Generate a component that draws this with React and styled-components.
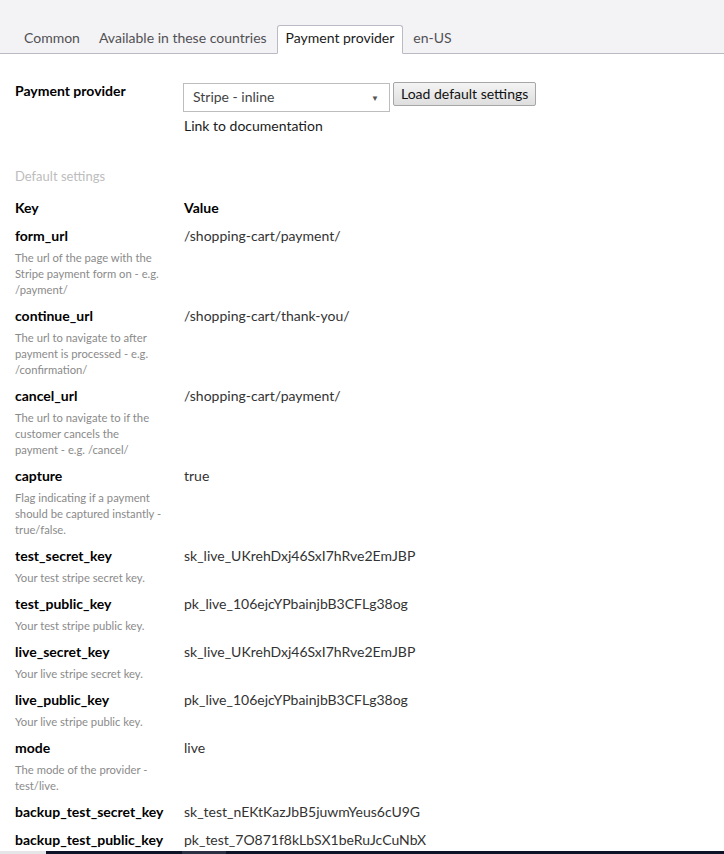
import React from "react";
import styled, { createGlobalStyle } from "styled-components";

const GlobalStyle = createGlobalStyle`
  html, body {
    margin: 0;
    padding: 0;
    background: #ffffff;
    font-family: Lato, "Open Sans", sans-serif;
    color: #1b1b1b;
  }
`;

const Page = styled.div`
  width: 724px;
  height: 854px;
  overflow: hidden;
  display: flex;
  flex-direction: column;
`;

const TabBar = styled.div`
  height: 53px;
  background: #f3f3f5;
  border-bottom: 1px solid #bbbac4;
  display: flex;
  align-items: flex-end;
  padding-left: 15px;
`;

const Tab = styled.div`
  height: 29px;
  box-sizing: border-box;
  padding: 0 8px 4px;
  margin-right: 1px;
  margin-bottom: -1px;
  display: flex;
  align-items: center;
  font-size: 14px;
  color: ${(p) => (p.$active ? "#1b1b1b" : "#515054")};
  background: ${(p) => (p.$active ? "#ffffff" : "transparent")};
  border: 1px solid ${(p) => (p.$active ? "#bbbac4" : "transparent")};
  border-bottom-color: ${(p) => (p.$active ? "#ffffff" : "transparent")};
  border-radius: 3px 3px 0 0;
`;

const Content = styled.div`
  flex: 1;
  padding: 27px 15px 0;
`;

const FieldRow = styled.div`
  display: grid;
  grid-template-columns: 169px 1fr;
`;

const FieldLabel = styled.div`
  font-size: 14px;
  font-weight: 700;
  line-height: 20px;
  color: #000;
`;

const Controls = styled.div`
  display: flex;
  flex-direction: column;
`;

const ControlLine = styled.div`
  display: flex;
  align-items: flex-start;
  gap: 3px;
  margin-top: 2px;
  margin-left: -1px;
`;

const Select = styled.div`
  width: 207px;
  height: 29px;
  box-sizing: border-box;
  border: 1px solid #bdbdbd;
  background: #fff;
  display: flex;
  align-items: center;
  justify-content: space-between;
  padding: 0 10px 2px 9px;
  font-size: 14px;
  color: #444;
`;

const Caret = styled.span`
  font-size: 8px;
  color: #555;
  padding-top: 3px;
`;

const Button = styled.button`
  height: 24px;
  padding: 0 7px;
  font-family: Lato, "Open Sans", sans-serif;
  font-size: 14px;
  color: #111;
  background: linear-gradient(#f4f4f4, #dedede);
  border: 1px solid #a6a6a6;
  border-radius: 2px;
  line-height: 20px;
  margin-top: -1px;
`;

const DocLink = styled.div`
  margin-top: 4px;
  font-size: 14px;
  line-height: 20px;
  color: #1b1b1b;
`;

const SectionTitle = styled.div`
  margin-top: 30px;
  font-size: 13px;
  line-height: 20px;
  color: #bdbdbd;
`;

const Table = styled.div`
  margin-top: 12px;
  display: grid;
  grid-template-columns: 169px 1fr;
`;

const Cell = styled.div`
  padding-bottom: ${(p) => (p.$last ? "1px" : "8px")};
`;

const KeyText = styled.div`
  font-size: 14px;
  font-weight: 700;
  line-height: 20px;
  color: #000;
`;

const Desc = styled.div`
  margin-top: 4px;
  font-size: 11.25px;
  line-height: 16px;
  color: #8a8a8a;
  width: 147px;
`;

const Value = styled.div`
  font-size: 14px;
  line-height: 20px;
  color: #333;
`;

const BottomBar = styled.div`
  height: 3px;
  display: flex;
`;

const BarPart = styled.div`
  width: ${(p) => p.$w}px;
  flex: ${(p) => (p.$grow ? 1 : "none")};
  background: ${(p) => p.$c};
`;

const rows = [
  ["form_url", "The url of the page with the Stripe payment form on - e.g. /payment/", "/shopping-cart/payment/"],
  ["continue_url", "The url to navigate to after payment is processed - e.g. /confirmation/", "/shopping-cart/thank-you/"],
  ["cancel_url", "The url to navigate to if the customer cancels the payment - e.g. /cancel/", "/shopping-cart/payment/"],
  ["capture", "Flag indicating if a payment should be captured instantly - true/false.", "true"],
  ["test_secret_key", "Your test stripe secret key.", "sk_live_UKrehDxj46SxI7hRve2EmJBP"],
  ["test_public_key", "Your test stripe public key.", "pk_live_106ejcYPbainjbB3CFLg38og"],
  ["live_secret_key", "Your live stripe secret key.", "sk_live_UKrehDxj46SxI7hRve2EmJBP"],
  ["live_public_key", "Your live stripe public key.", "pk_live_106ejcYPbainjbB3CFLg38og"],
  ["mode", "The mode of the provider - test/live.", "live"],
  ["backup_test_secret_key", null, "sk_test_nEKtKazJbB5juwmYeus6cU9G"],
  ["backup_test_public_key", null, "pk_test_7O871f8kLbSX1beRuJcCuNbX"],
];

const tabs = ["Common", "Available in these countries", "Payment provider", "en-US"];

export default function App() {
  return (
    <Page>
      <GlobalStyle />
      <TabBar>
        {tabs.map((t) => (
          <Tab key={t} $active={t === "Payment provider"}>
            {t}
          </Tab>
        ))}
      </TabBar>
      <Content>
        <FieldRow>
          <FieldLabel>Payment provider</FieldLabel>
          <Controls>
            <ControlLine>
              <Select>
                <span>Stripe - inline</span>
                <Caret>▼</Caret>
              </Select>
              <Button>Load default settings</Button>
            </ControlLine>
            <DocLink>Link to documentation</DocLink>
          </Controls>
        </FieldRow>
        <SectionTitle>Default settings</SectionTitle>
        <Table>
          <Cell>
            <KeyText>Key</KeyText>
          </Cell>
          <Cell>
            <KeyText>Value</KeyText>
          </Cell>
          {rows.map(([k, d, v], i) => {
            const last = i === rows.length - 1;
            return (
              <React.Fragment key={k}>
                <Cell $last={last}>
                  <KeyText>{k}</KeyText>
                  {d && <Desc>{d}</Desc>}
                </Cell>
                <Cell $last={last}>
                  <Value>{v}</Value>
                </Cell>
              </React.Fragment>
            );
          })}
        </Table>
      </Content>
      <BottomBar>
        <BarPart $w={46} $c="#e6e6e8" />
        <BarPart $w={136} $c="#0d1428" />
        <BarPart $w={44} $c="#2b3142" />
        <BarPart $grow $c="#0d1428" />
      </BottomBar>
    </Page>
  );
}
